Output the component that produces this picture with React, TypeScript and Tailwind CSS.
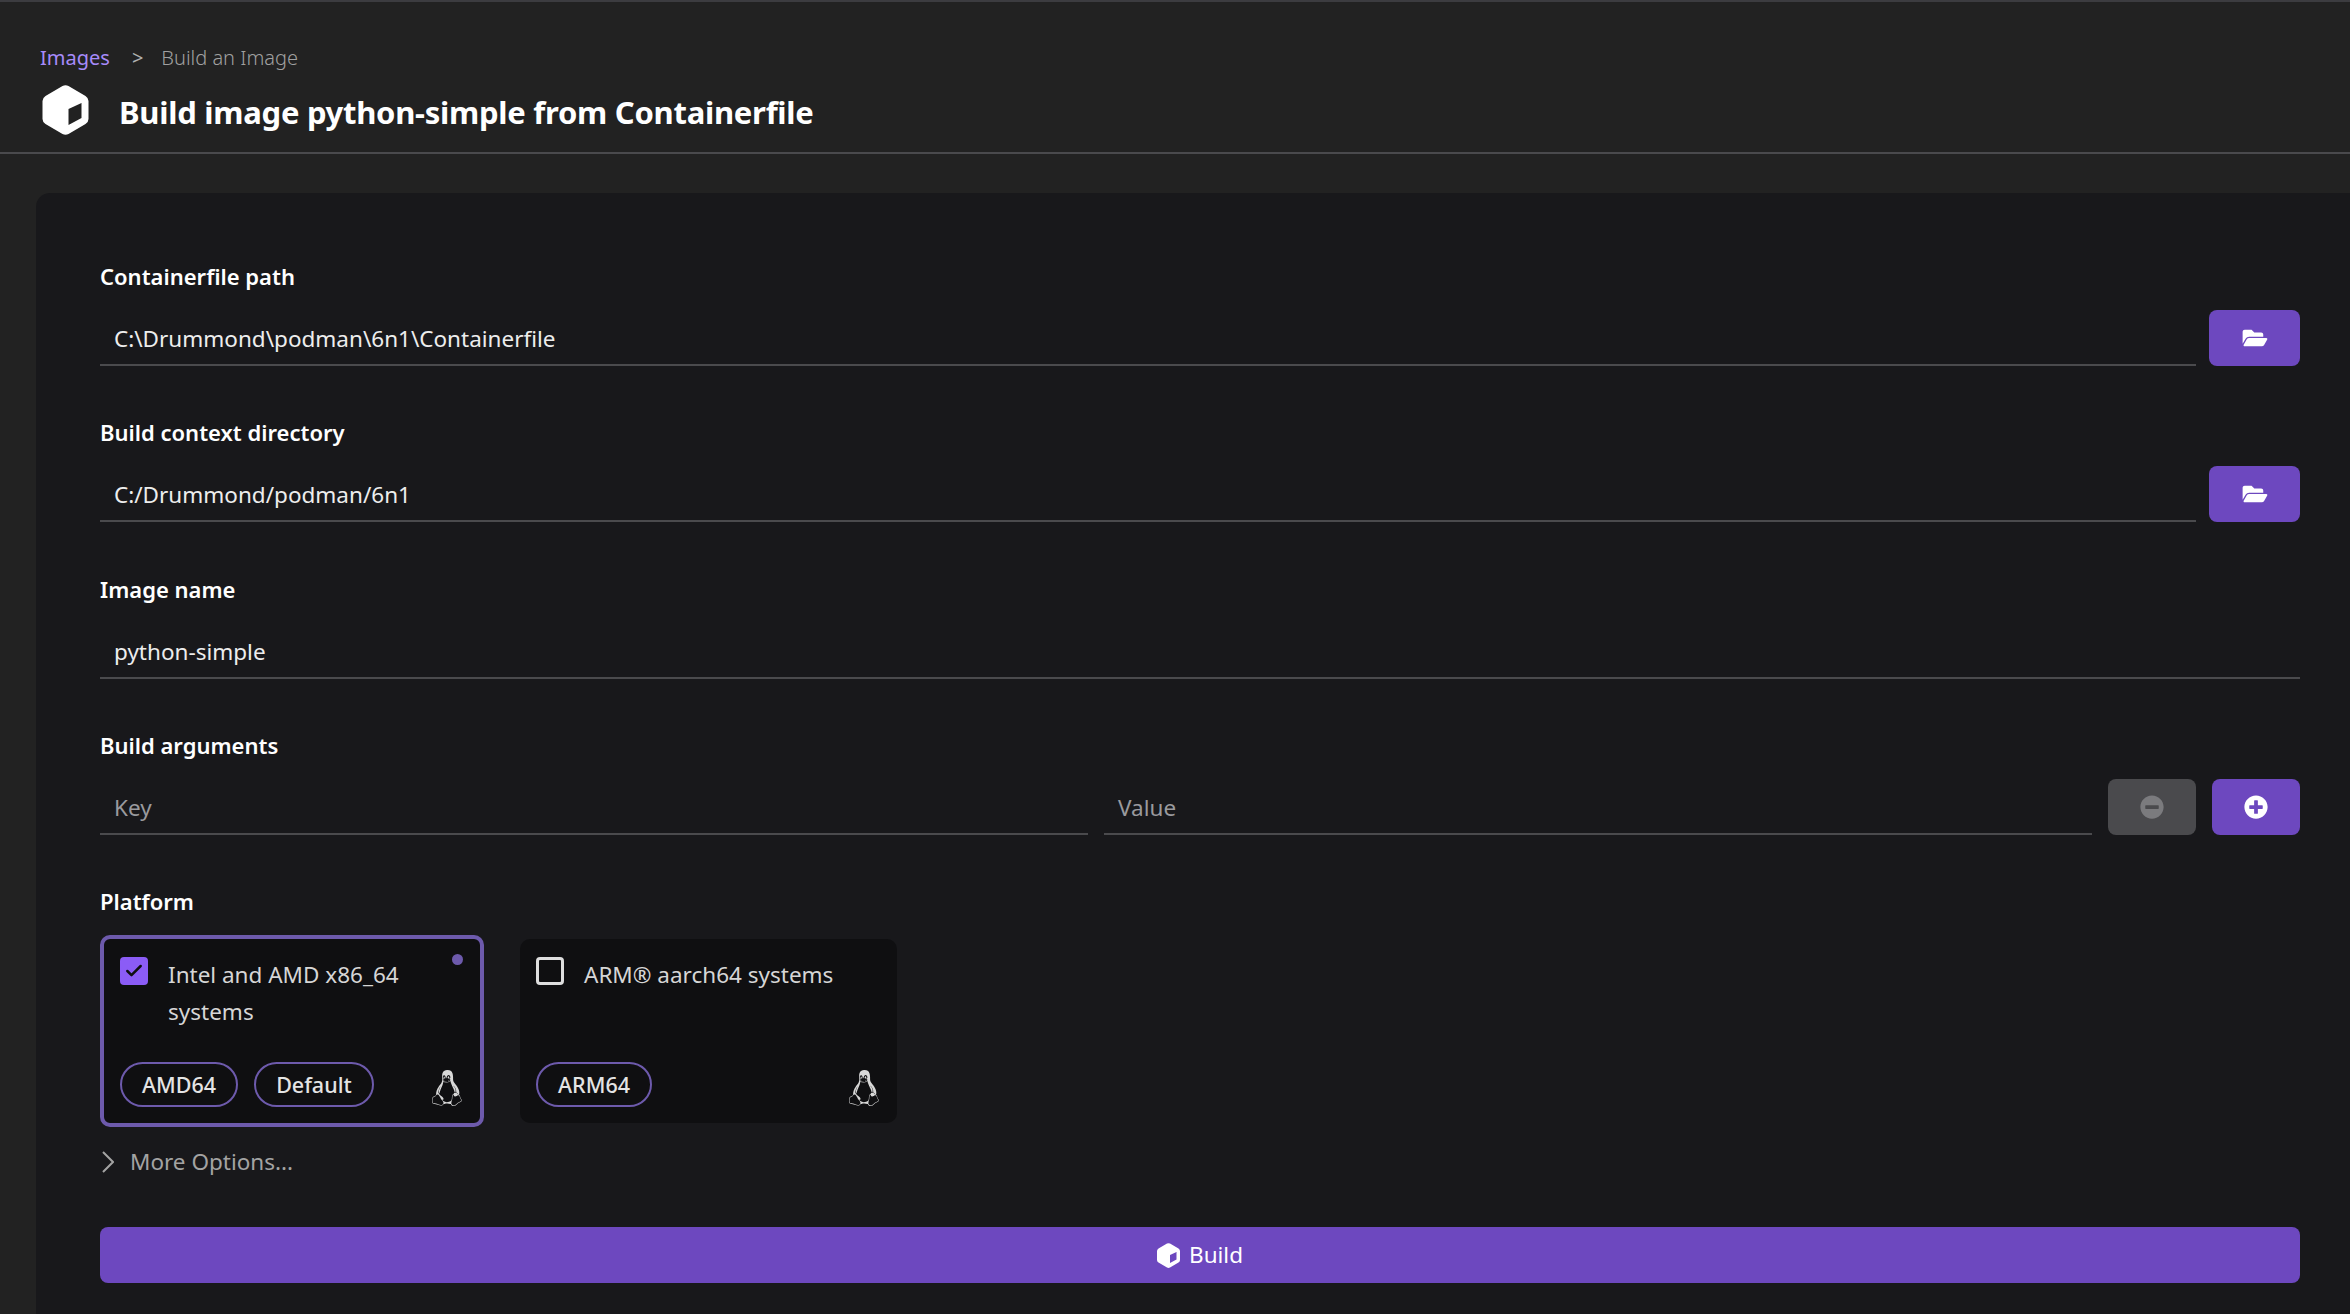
import { FaFolderOpen, FaMinusCircle, FaPlusCircle } from "react-icons/fa";
import { SiLinux } from "react-icons/si";
import { Check } from "lucide-react";

const CubeIcon = ({ className }: { className: string }) => (
  <svg viewBox="0 0 46 50" className={className}>
    <path
      fill="currentColor"
      fillRule="evenodd"
      d="M20 1 L3 11 Q0 13 0 16 V34 Q0 37 3 39 L20 49 Q23 50.5 26 49 L43 39 Q46 37 46 34 V16 Q46 13 43 11 L26 1 Q23 -0.5 20 1 Z M26 24 L39 18 V33 L26 40 Z"
    />
  </svg>
);

const FieldLabel = ({ children }: { children: string }) => (
  <div className="mb-[20px] h-[28px] text-[22px] leading-[28px] font-semibold text-white">{children}</div>
);

const TextInput = ({ value, placeholder, className }: { value?: string; placeholder?: string; className: string }) => (
  <div className={`flex h-[56px] items-center border-b-2 border-[#4a4a4d] pt-[3px] pl-[14px] text-[22.5px] ${className}`}>
    {value ? <span className="text-[#ededed]">{value}</span> : <span className="text-[#9a9a9e]">{placeholder}</span>}
  </div>
);

const IconButton = ({ children, muted, wide }: { children: React.ReactNode; muted?: boolean; wide?: boolean }) => (
  <div className={`flex h-[56px] shrink-0 items-center justify-center rounded-[8px] ${wide ? "w-[91px]" : "w-[88px]"} ${muted ? "bg-[#4a4a4d] text-[#7b7b7e]" : "bg-[#6d48bf] text-white"}`}>
    {children}
  </div>
);

const Chip = ({ children }: { children: string }) => (
  <span className="flex h-[45px] items-center rounded-full border-2 border-[#6d5aac] px-[20px] pt-[2px] text-[21.5px] font-medium text-[#e4e4e4]">
    {children}
  </span>
);

const PlatformCard = ({ label, chips, selected }: { label: string; chips: string[]; selected?: boolean }) => (
  <div className={`relative flex flex-col justify-between rounded-[10px] bg-[#0f0f11] ${selected ? "h-[192px] w-[384px] border-4 border-[#6d5aac] px-[16px] pt-[17px] pb-[16px]" : "my-[4px] h-[184px] w-[377px] px-[16px] pt-[17px] pb-[16px]"}`}>
    <div className="flex items-start gap-[20px]">
      <div className={`mt-[1px] flex h-[28px] w-[28px] shrink-0 items-center justify-center rounded-[4px] ${selected ? "bg-[#8b5cf6]" : "border-[3px] border-[#dedede]"}`}>
        {selected && <Check className="h-[20px] w-[20px] text-[#0f0f11]" strokeWidth={3} />}
      </div>
      <div className="w-[270px] text-[22.5px] leading-[37px] text-[#d6d6d6]">{label}</div>
    </div>
    <div className="flex items-end justify-between">
      <div className="flex gap-[16px]">
        {chips.map((chip) => (
          <Chip key={chip}>{chip}</Chip>
        ))}
      </div>
      <SiLinux className="mb-[1px] mr-[-1px] h-[36px] w-[36px] text-[#d8d8d8]" />
    </div>
    {selected && <div className="absolute top-[15px] right-[17px] h-[11px] w-[11px] rounded-full bg-[#6d5aac]" />}
  </div>
);

export default function App() {
  return (
    <div className="flex h-[1314px] w-[2350px] flex-col overflow-hidden border-t-2 border-[#3c3c40] bg-[#222222] font-['Noto_Sans',sans-serif]">
      <div className="h-[152px] shrink-0 border-b-2 border-[#4a4a4d] pt-[41px] pl-[40px]">
        <div className="flex h-[30px] items-center text-[20px]">
          <span className="text-[#a78bfa]">Images</span>
          <span className="mr-[18px] ml-[22px] text-[#b0b0b0]">&gt;</span>
          <span className="font-light text-[#a0a0a0]">Build an Image</span>
        </div>
        <div className="mt-[12px] flex items-start gap-[30px] pl-[2px]">
          <CubeIcon className="h-[50px] w-[47px] text-white" />
          <h1 className="mt-[2px] text-[31px] leading-[50px] font-bold tracking-[-0.27px] text-white">Build image python-simple from Containerfile</h1>
        </div>
      </div>

      <div className="mt-[39px] ml-[36px] flex-1 rounded-tl-[14px] bg-[#18181b] pt-[69px] pr-[50px] pl-[64px]">
        <FieldLabel>Containerfile path</FieldLabel>
        <div className="flex gap-[13px]">
          <TextInput value={"C:\\Drummond\\podman\\6n1\\Containerfile"} className="flex-1" />
          <IconButton wide><FaFolderOpen className="h-[22px] w-[26px]" /></IconButton>
        </div>

        <div className="mt-[52px]" />
        <FieldLabel>Build context directory</FieldLabel>
        <div className="flex gap-[13px]">
          <TextInput value="C:/Drummond/podman/6n1" className="flex-1" />
          <IconButton wide><FaFolderOpen className="h-[22px] w-[26px]" /></IconButton>
        </div>

        <div className="mt-[53px]" />
        <FieldLabel>Image name</FieldLabel>
        <TextInput value="python-simple" className="w-full" />

        <div className="mt-[52px]" />
        <FieldLabel>Build arguments</FieldLabel>
        <div className="flex gap-[16px]">
          <TextInput placeholder="Key" className="flex-1" />
          <TextInput placeholder="Value" className="flex-1" />
          <IconButton muted><FaMinusCircle className="h-[24px] w-[24px]" /></IconButton>
          <IconButton><FaPlusCircle className="h-[24px] w-[24px]" /></IconButton>
        </div>

        <div className="mt-[52px]" />
        <FieldLabel>Platform</FieldLabel>
        <div className="flex gap-[36px]">
          <PlatformCard label="Intel and AMD x86_64 systems" chips={["AMD64", "Default"]} selected />
          <PlatformCard label="ARM® aarch64 systems" chips={["ARM64"]} />
        </div>

        <div className="mt-[20px] flex h-[30px] items-center gap-[16px] pl-[2px] text-[22.5px] text-[#a3a3a3]">
          <svg viewBox="0 0 12 22" className="h-[22px] w-[12px]" fill="none" stroke="currentColor" strokeWidth="2">
            <path d="M1 1 L11 11 L1 21" />
          </svg>
          <span>More Options...</span>
        </div>

        <div className="mt-[50px] flex h-[56px] items-center justify-center gap-[9px] rounded-[8px] bg-[#6d48bf] text-[22.5px] text-white">
          <CubeIcon className="h-[25px] w-[23px]" />
          <span>Build</span>
        </div>
      </div>
    </div>
  );
}
